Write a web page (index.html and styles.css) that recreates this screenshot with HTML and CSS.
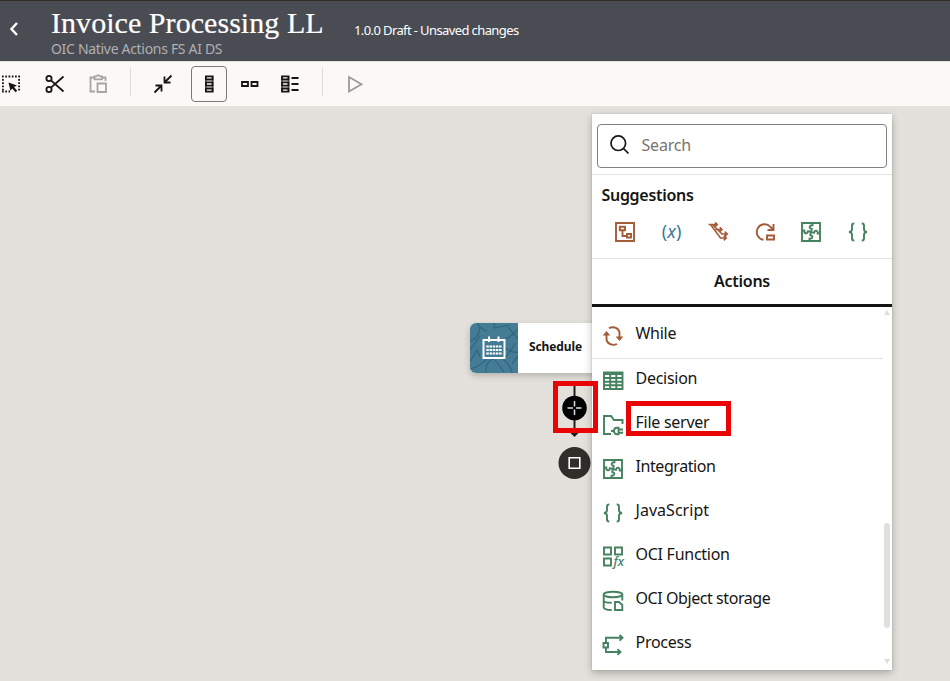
FILE: index.html
```html
<!DOCTYPE html>
<html lang="en">
<head>
<meta charset="utf-8">
<title>Invoice Processing LL</title>
<link rel="stylesheet" href="styles.css">
</head>
<body>
<svg class="defs" width="0" height="0">
  <symbol id="puzzle" viewBox="0 0 24 24"><path d="M3 3h18v18H3z"/><path d="M13.500 3v2.300c-3.500-.3-3.800 3.200-.8 3.500.3 1.500-.7 2.200-.7 3.200M10.500 21v-2.300c3.500.3 3.800-3.200.8-3.500-.3-1.500.7-2.200.7-3.200M3 10.500h2.300c-.3 3.500 3.200 3.800 3.500.8 1.500-.3 2.200.7 3.200.7M21 13.500h-2.300c.3-3.500-3.200-3.800-3.500-.8-1.500.3-2.200-.7-3.200-.7"/></symbol>
  <symbol id="braces" viewBox="0 0 24 24"><path d="M8.300 3.500H8C6.500 3.500 6 4.300 6 5.500v3.700c0 1.500-.9 2.500-3 2.800 2.100.3 3 1.300 3 2.800v3.700c0 1.200.5 2 2 2h.3M15.700 3.500h.3c1.500 0 2 .8 2 2v3.700c0 1.500.9 2.500 3 2.800-2.100.3-3 1.300-3 2.800v3.700c0 1.200-.5 2-2 2h-.3"/></symbol>
</svg>

<header class="header">
  <svg class="back" viewBox="0 0 12 16"><path d="M9 2 3.500 8 9 14"/></svg>
  <div class="titles">
    <h1>Invoice Processing LL</h1>
    <p>OIC Native Actions FS AI DS</p>
  </div>
  <span class="status">1.0.0 Draft - Unsaved changes</span>
</header>

<nav class="toolbar">
  <svg class="tool" viewBox="0 0 24 24"><path d="M3 4.500h18M3 19.500h8" stroke-dasharray="1.700 1.560"/><path d="M3.900 7v12M20.100 7v12" stroke-dasharray="1.700 1.560"/><path class="solid" d="m9.500 10.500 8.500 3-3 1.500 3.200 3.700-1.700 1.500-3.200-3.700-1.900 2.200z"/></svg>
  <svg class="tool cut" viewBox="0 0 24 24"><circle cx="6" cy="6.500" r="2.600"/><circle cx="6" cy="17.500" r="2.600"/><path d="M8 8.300 20.500 19.500M8 15.700 20.500 4.500"/></svg>
  <svg class="tool paste" viewBox="0 0 24 24"><path d="M9 19.500H4.500v-14H8M16 5.500h3.500V9M8.500 4.300h2l1-1h1.500l1 1h2v3h-7.500zM11.500 11.500h8.500v8.500h-8.500z"/></svg>
  <i class="sep"></i>
  <svg class="tool collapse" viewBox="0 0 24 24"><path d="m20.500 3.500-7 7M13.500 4.500v6h6M3.500 20.500l7-7M4.500 13.500h6v6"/></svg>
  <button class="selected"><svg class="tool" viewBox="0 0 24 24"><path class="link" d="M8.900 4v16M15.600 4v16"/><path d="M8.900 4.300h6.700v3.200H8.900zM8.900 10.400h6.700v3.200H8.900zM8.900 16.500h6.700v3.200H8.900z"/></svg></button>
  <svg class="tool horiz" viewBox="0 0 24 24"><path d="M4 10h6v4H4zM13.500 10h6v4h-6z"/></svg>
  <svg class="tool listing" viewBox="0 0 24 24"><path class="link" d="M4 4v16M10.500 4v16"/><path d="M4 4.300h6.500v3.200H4zM4 10.400h6.500v3.200H4zM4 16.500h6.500v3.200H4zM13.500 6h7M13.500 12h7M13.500 18h7"/></svg>
  <i class="sep second"></i>
  <svg class="tool run" viewBox="0 0 24 24"><path d="M6 5v14.500l12.500-7.250z"/></svg>
</nav>

<main class="canvas">
  <div class="node">
    <div class="tile">
      <svg viewBox="0 0 48 50">
        <path class="vein" d="M7 0c3 5 6 7 10 8M0 18c5-1 9-5 10-14M10 13 0 27M0 39l7-12 3 7M0 46c8-2 14-6 18-12M16 50c-1-8 3-14 9-14M25 37l9 12M24 0v5L39 2M38 4l10 12M31 18c7-2 11-5 17-12M35 25c6 4 10 5 13 4M46 20 34 37M33 36c5 4 8 8 9 14M42 41l6-8"/>
        <path class="cal" d="M13.500 17h21v18h-21zM19 13.500V19M28.500 13.500V19"/>
        <path class="days" d="M16.300 23.500h15.400M16.300 27h15.400M16.300 30.500h15.400"/>
      </svg>
    </div>
    <span>Schedule</span>
  </div>
  <svg class="flow" viewBox="0 0 36 106">
    <path class="wire" d="M18.500 12v50"/><path class="tip" d="M14 59.500h9l-4.500 4.500z"/>
    <circle class="plus" cx="18.500" cy="35" r="12.300"/><path class="cross" d="M18.500 28v5.500M18.500 36.500V42M11.500 35H17M20 35h5.500"/>
    <circle class="end" cx="18.500" cy="90" r="16"/><path class="stop" d="M13.200 84.800h10.600v10.500H13.200z"/>
  </svg>

  <aside class="panel">
    <div class="searchwrap"><div class="search">
      <svg viewBox="0 0 24 24"><circle cx="10.300" cy="10.200" r="7.300"/><path d="m15.500 15.500 5 5"/></svg><span>Search</span>
    </div></div>
    <section class="suggest">
      <h2>Suggestions</h2>
      <div class="icons">
        <svg class="ic brown" viewBox="0 0 24 24"><path d="M3 3h18v18H3z"/><path d="M6.800 6.800h5.200v3.500H6.800zM14 14h4v3.500h-4zM9.500 10.500V16H14"/></svg>
        <span class="var">(<i>x</i>)</span>
        <svg class="ic brown thin" viewBox="0 0 24 24"><path d="M2.500 4.500H11M4.500 4.500l10 13.500H20M9.500 9.500h6.500M6.500 4.500l9.500 9.500h5M9 2.300l2.300 2.200L9 6.700M13.800 7.300 16 9.500l-2.200 2.200M18.800 11.700l2.400 2.300-2.400 2.300M17.800 15.700l2.400 2.300-2.400 2.300"/></svg>
        <svg class="ic brown" viewBox="0 0 24 24"><path d="M10.500 19.800A7.800 7.800 0 1 1 17.500 7l2.500 2.500M20.500 4v6H14.500M14 15.500h7v4h-7z"/></svg>
        <svg class="ic green"><use href="#puzzle"/></svg>
        <svg class="ic green"><use href="#braces"/></svg>
      </div>
    </section>
    <div class="tab">Actions</div>
    <div class="list">
      <div class="row while"><svg class="ic brown" viewBox="0 0 24 24"><path d="M8 4.200C13.500 1.500 18.500 5 18.500 9v4.500M16 20c-5.500 2.500-10.500-1-10.500-5v-4.500"/><path class="fill" d="M14.700 12.500h7.600L18.500 17zM1.700 11.500h7.600L5.500 7z"/></svg><span>While</span></div>
      <div class="row"><svg class="ic green" viewBox="0 0 24 24"><path d="M3 3.500h18.500V20H3zM3 5h18.500M3 9h18.500M3 12.700h18.500M3 16.300h18.500M9.200 6v14M15.300 6v14"/></svg><span>Decision</span></div>
      <div class="row"><svg class="ic green" viewBox="0 0 24 24"><path d="M10 21H3V3h7l3 4h8.500v4M17.500 14.800V21.200h-1.500c-4 0-4-6.400 0-6.400zM10 18h3M18 16.500h4M18 19.800h4"/></svg><span>File server</span></div>
      <div class="row tight"><svg class="ic green"><use href="#puzzle"/></svg><span>Integration</span></div>
      <div class="row wide"><svg class="ic green"><use href="#braces"/></svg><span>JavaScript</span></div>
      <div class="row"><svg class="ic green" viewBox="0 0 24 24"><path d="M3 2.500h7v7H3zM14 2.500h7v7h-7zM3 13.500h7v7H3z"/><text x="12.500" y="21">fx</text></svg><span>OCI Function</span></div>
      <div class="row tight"><svg class="ic green" viewBox="0 0 24 24"><ellipse cx="12" cy="5.500" rx="9.300" ry="2.800"/><path d="M2.700 5.500v12.800c0 1.500 3 2.700 8 2.700M2.700 11.500c0 1.300 3 2.300 8 2.300M21.300 5.500v6M14 13h4l3.300 3v5H14z"/></svg><span>OCI Object storage</span></div>
      <div class="row"><svg class="ic green" viewBox="0 0 24 24"><path d="M2.500 10h4.500v4.500H2.500zM5 10V4.800h16M18.500 2l3 2.800-3 2.800M5 14.500V19h14M16.500 16.200l3 2.800-3 2.800"/></svg><span>Process</span></div>
      <i class="arrow up"></i><i class="thumb"></i><i class="arrow down"></i>
    </div>
  </aside>
  <div class="mark add"></div>
  <div class="mark file"></div>
</main>
</body>
</html>
```
FILE: styles.css
```css
* { box-sizing: border-box; }
body { margin: 0; width: 950px; height: 681px; overflow: hidden; display: flex; flex-direction: column; font-family: "Noto Sans", sans-serif; color: #161513; }
svg { display: block; flex: none; fill: none; stroke: currentColor; }
.defs { position: absolute; }
h1, h2, p { margin: 0; }

.header { height: 61px; flex: none; display: flex; background: #4a4c54; border-top: 1px solid #312d2a; color: #fff; }
.back { width: 12px; height: 16px; margin: 20px 0 0 8px; stroke-width: 2.4; }
.titles { width: 303px; margin-left: 31px; white-space: nowrap; }
h1 { font: 400 30px/32px "Liberation Serif", serif; margin-top: 6px; margin-bottom: 1px; letter-spacing: .05px; -webkit-text-stroke: .2px #fff; }
.titles p { font-size: 14px; line-height: 18px; color: #b0b0b3; letter-spacing: -.31px; }
.status { font-size: 13px; line-height: 20px; margin-top: 19px; white-space: nowrap; letter-spacing: -.61px; }

.toolbar { height: 45px; flex: none; display: flex; align-items: center; background: #fbf9f8; border-top: 1px solid #e4e1dd; padding-bottom: 1px; }
.tool { width: 24px; height: 24px; stroke-width: 1.8; }
.toolbar > .tool:first-child { margin-left: -1px; }
.solid { fill: #161513; stroke: none; }
.cut { margin-left: 19.500px; }
.paste { margin-left: 19.500px; color: #a8a6a4; }
.sep { width: 1px; height: 29px; background: #dedcda; margin: -5px 20px 0; }
.selected { width: 36px; height: 36px; padding: 5px; margin: 0 11px 0 16px; border: 1px solid #7c7a78; border-radius: 4px; background: none; color: inherit; }
.link { stroke: #777; }
.listing { margin-left: 15.500px; }
.run { margin-left: .5px; color: #9b999a; }

.canvas { position: relative; flex: 1; background: #e4e1dc; }
.node { position: absolute; left: 470px; top: 217px; width: 150px; height: 50px; display: flex; align-items: center; border-radius: 6px; background: #fff; box-shadow: 0 3px 7px rgba(0,0,0,.2); font-size: 12px; font-weight: 700; letter-spacing: -.1px; }
.node span { padding-bottom: 3px; }
.tile { width: 48px; height: 50px; margin-right: 11px; border-radius: 6px 0 0 6px; background: #437c94; overflow: hidden; }
.vein { stroke: #32657b; stroke-width: 1.2; }
.cal { stroke: #fff; stroke-width: 2; }
.days { stroke: #fff; stroke-width: 2.2; stroke-dasharray: 2.500 .7; }
.flow { position: absolute; left: 556px; top: 267px; width: 36px; height: 106px; }
.wire { stroke: #201e1c; stroke-width: 2; }
.tip { fill: #201e1c; stroke: none; }
.plus { fill: #000; stroke: none; }
.end { fill: #312d2a; stroke: none; }
.cross { stroke: #ddd; stroke-width: 1.5; }
.stop { stroke: #fff; stroke-width: 1.6; }

.panel { position: absolute; left: 592px; top: 8px; width: 300px; height: 556px; background: #fff; box-shadow: 0 3px 8px rgba(0,0,0,.26), 0 0 1px #aaa; }
.searchwrap { height: 61px; padding: 10px 5px 0; border-bottom: 1px solid #e4e3e2; }
.search { height: 44px; border: 1px solid #82807e; border-radius: 4px; display: flex; align-items: center; gap: 10px; padding: 0 9.500px 2px; font-size: 16px; color: #77736f; letter-spacing: -.2px; }
.search svg { width: 24px; height: 24px; stroke: #161513; stroke-width: 1.700; }
.suggest { height: 84px; border-bottom: 1px solid #e4e3e2; padding-top: 8px; }
h2 { font-size: 16px; line-height: 24px; font-weight: 600; margin-left: 9.500px; letter-spacing: -.3px; }
.icons { display: flex; justify-content: space-between; align-items: center; margin-top: 13px; padding: 0 22px 0 21px; height: 24px; }
.ic { width: 24px; height: 24px; stroke-width: 1.900; }
.thin { stroke-width: 1.600; }
.brown { color: #a45b37; }
.green { color: #468260; }
.fill { fill: currentColor; stroke: none; }
.var { width: 24px; text-align: center; color: #3b7895; font-size: 18px; line-height: 22px; margin-top: -3px; }
.tab { height: 48px; border-bottom: 3px solid #161513; text-align: center; font-size: 16px; font-weight: 600; line-height: 45px; letter-spacing: -.25px; }
.list { position: relative; padding-top: 7px; }
.row { height: 44px; display: flex; align-items: flex-start; padding: 7px 0 0 9px; font-size: 16px; line-height: 24px; white-space: nowrap; letter-spacing: -.27px; }
.row.tight { letter-spacing: -.43px; }
.row.wide { letter-spacing: .03px; }
.row .ic { margin: 3px 10.500px 0 0; }
.row text { font: italic 500 12.500px "Noto Sans", sans-serif; letter-spacing: 0; fill: currentColor; stroke: none; }
.while { height: 45px; width: 291px; border-bottom: 1px solid #e4e3e2; }
.arrow { position: absolute; right: 2px; border: 3px solid transparent; }
.up { top: 0; border-bottom: 5px solid #dedede; }
.down { top: 352px; border-top: 5px solid #dedede; }
.thumb { position: absolute; right: 2px; top: 216px; width: 6px; height: 105px; border-radius: 3px; background: #e0e0df; }

.mark { position: absolute; border: 5px solid #e90505; }
.add { left: 553px; top: 275px; width: 45px; height: 52px; }
.file { left: 626px; top: 295px; width: 105px; height: 35px; }
```
